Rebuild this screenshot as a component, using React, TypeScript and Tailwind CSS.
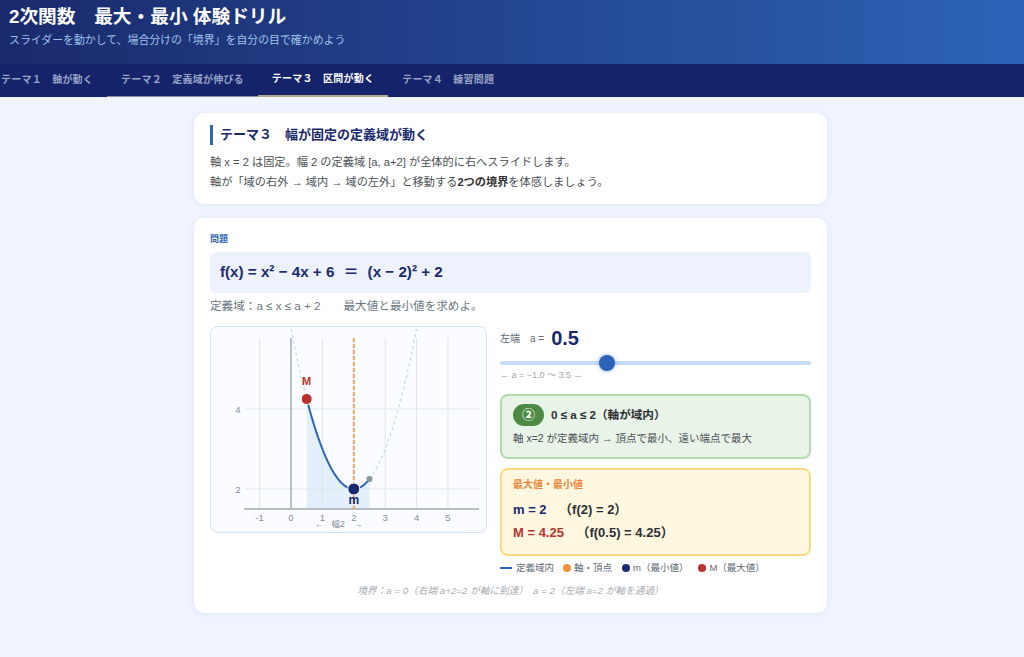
const TABS = ["テーマ１　軸が動く", "テーマ２　定義域が伸びる", "テーマ３　区間が動く", "テーマ４　練習問題"];

// chart scale, px inside the 277x207 panel
const px = (x: number) => 81 + 31.4 * x;
const py = (y: number) => 163 - 40 * (y - 2);
const f = (x: number) => (x - 2) * (x - 2) + 2;

function curve(from: number, to: number) {
  const pts: string[] = [];
  for (let i = 0; i <= 60; i++) {
    const x = from + ((to - from) * i) / 60;
    pts.push(`${px(x).toFixed(1)},${py(f(x)).toFixed(1)}`);
  }
  return pts.join(" ");
}

function Chart() {
  const area = `${px(0.5)},183 ${curve(0.5, 2.5)} ${px(2.5)},183`;
  return (
    <div className="h-[207px] overflow-hidden rounded-lg border border-[#cfe3f3] bg-[#fafcff]">
      <svg width="275" height="205" viewBox="1 1 275 205" className="block" fontFamily="'Liberation Sans', 'Noto Sans CJK JP', sans-serif">
        <polygon points={area} fill="#e3effa" />
        {[-1, 1, 2, 3, 4, 5].map((x) => (
          <line key={x} x1={px(x)} x2={px(x)} y1="12" y2="183" stroke="#dfe4ea" strokeWidth="1" />
        ))}
        {[2, 4].map((y) => (
          <line key={y} x1="35" x2="269" y1={py(y)} y2={py(y)} stroke="#e1e7ee" strokeWidth="1" />
        ))}
        <line x1={px(0)} x2={px(0)} y1="12" y2="183" stroke="#a3abb3" strokeWidth="1.5" />
        <line x1="34" x2="269" y1="183" y2="183" stroke="#a3abb3" strokeWidth="1.5" />
        <polyline points={curve(0, 0.5)} fill="none" stroke="#bcd8ee" strokeWidth="1.2" strokeDasharray="3 3" />
        <polyline points={curve(2.5, 4)} fill="none" stroke="#bcd8ee" strokeWidth="1.2" strokeDasharray="3 3" />
        <line x1={px(2)} x2={px(2)} y1="12" y2="183" stroke="#e8a560" strokeWidth="2" strokeDasharray="4 2" />
        <polyline points={curve(0.5, 2.5)} fill="none" stroke="#2f66b5" strokeWidth="2" />
        <circle cx={px(0.5)} cy={py(4.25)} r="5.5" fill="#b8322e" stroke="#fff" strokeWidth="1" />
        <circle cx={px(2)} cy={py(2)} r="6" fill="#1a2a72" stroke="#fff" strokeWidth="1" />
        <circle cx={px(2.5)} cy={py(2.25)} r="3" fill="#87959f" />
        <text x={px(0.5)} y="59" textAnchor="middle" fontSize="11" fontWeight="700" fill="#b8322e">M</text>
        <text x={px(2)} y="178" textAnchor="middle" fontSize="12" fontWeight="700" fill="#1a2a72">m</text>
        {[-1, 0, 1, 2, 3, 4, 5].map((x) => (
          <text key={x} x={px(x)} y="194.5" textAnchor="middle" fontSize="9.5" fill="#868e96">{x}</text>
        ))}
        <text x="28" y={py(4) + 3.5} textAnchor="middle" fontSize="9.5" fill="#868e96">4</text>
        <text x="28" y={py(2) + 3.5} textAnchor="middle" fontSize="9.5" fill="#868e96">2</text>
        <text x="109" y="201" textAnchor="middle" fontSize="8.5" fill="#868e96">←</text>
        <text x="128" y="201" textAnchor="middle" fontSize="8.5" fill="#868e96">幅2</text>
        <text x="148" y="201" textAnchor="middle" fontSize="8.5" fill="#868e96">→</text>
      </svg>
    </div>
  );
}

function Legend() {
  return (
    <div className="mt-[5px] flex items-center text-[9.5px] leading-[14px] text-[#5f6b75]">
      <span className="mr-[4px] h-[2px] w-3 bg-[#2f66b5]" />
      <span>定義域内</span>
      <span className="ml-[9px] mr-[3px] h-2 w-2 rounded-full bg-[#f0923a]" />
      <span>軸・頂点</span>
      <span className="ml-[10px] mr-[3px] h-2 w-2 rounded-full bg-[#1a2a72]" />
      <span>m（最小値）</span>
      <span className="ml-[10px] mr-[3px] h-2 w-2 rounded-full bg-[#b8322e]" />
      <span>M（最大値）</span>
    </div>
  );
}

export default function App() {
  const a = 0.5;
  const pct = (a + 1) / 4.5;

  return (
    <div className="h-[657px] overflow-hidden bg-[#f0f4ff] font-['Liberation_Sans','Noto_Sans_CJK_JP',sans-serif]">
      <header className="h-[64px] bg-gradient-to-r from-[#1a2a6c] to-[#2c63b6] px-[9px] pt-[4px]">
        <h1 className="text-[18.7px] font-bold leading-[25px] text-white">2次関数　最大・最小 体験ドリル</h1>
        <p className="mt-[3px] text-[10.9px] leading-[16px] text-[#a0c1ec]">スライダーを動かして、場合分けの「境界」を自分の目で確かめよう</p>
      </header>

      <nav className="-ml-[13px] flex h-[33px] bg-[#14236a]">
        {TABS.map((t, i) => (
          <div
            key={t}
            className={`flex h-full items-center px-[14px] pb-[2px] text-[10px] font-bold tracking-[0.23px] ${
              i === 2
                ? "border-b-2 border-[#b5a98c] text-white"
                : i === 1
                  ? "border-b border-[#8a90a8] text-[#98a4c6]"
                  : "text-[#98a4c6]"
            }`}
          >
            {t}
          </div>
        ))}
      </nav>

      <main className="ml-[194px] mt-[16px] w-[633px]">
        <section className="h-[91px] rounded-[10px] bg-white px-[16px] pt-[12px] shadow-[0_1px_6px_rgba(40,70,140,0.08)]">
          <h2 className="border-l-[3px] border-[#2f66b5] pl-[7px] text-[13px] font-bold leading-[20px] text-[#1a2a6c]">テーマ３　幅が固定の定義域が動く</h2>
          <p className="mt-[7px] text-[11.2px] leading-[20px] text-[#4a4f55]">
            軸 x = 2 は固定。幅 2 の定義域 [a, a+2] が全体的に右へスライドします。
            <br />
            軸が「域の右外 → 域内 → 域の左外」と移動する<b className="text-[#333]">2つの境界</b>を体感しましょう。
          </p>
        </section>

        <section className="mt-[14px] h-[395px] rounded-[10px] bg-white px-[16px] pt-[15px] shadow-[0_1px_6px_rgba(40,70,140,0.08)]">
          <div className="text-[9px] font-bold leading-[12px] text-[#2f66b5]">問題</div>
          <div className="mt-[7px] flex h-[41px] items-center rounded-md bg-[#eef2fc] px-[10px] text-[15.2px] font-bold text-[#1a2a6c]">
            <span>f(x) = x² − 4x + 6</span>
            <span className="ml-[9px]">＝</span>
            <span className="ml-[9px]">(x − 2)² + 2</span>
          </div>
          <p className="mt-[5px] text-[11.6px] leading-[16px] text-[#6b7680]">定義域：a ≤ x ≤ a + 2　　最大値と最小値を求めよ。</p>

          <div className="mt-[12px] grid grid-cols-[277px_311px] gap-[13px]">
            <Chart />
            <div>
              <div className="flex h-[24px] items-center text-[10px] text-[#5f6b75]">
                <span>左端　a = </span>
                <span className="ml-[7px] text-[20px] font-bold text-[#1a2a6c]">{a}</span>
              </div>
              <div className="relative mt-[11px] h-1 rounded-full bg-[#c5def5]">
                <div
                  className="absolute -top-[6px] h-4 w-4 -translate-x-1/2 rounded-full bg-[#2c63b6] shadow-[0_0_4px_rgba(44,99,182,0.5)]"
                  style={{ left: 9 + pct * 295 }}
                />
              </div>
              <div className="mt-[4px] text-[9px] leading-[12px] text-[#a1a8ae]">← a = −1.0 〜 3.5 →</div>

              <div className="mt-[13px] h-[65px] rounded-lg border-2 border-[#b5dab0] bg-[#e9f4e8] px-[11px] pt-[8px]">
                <div className="flex items-center">
                  <span className="flex h-[22px] w-[31px] items-center justify-center rounded-full bg-[#4d8b45] text-[13px] font-bold text-white">②</span>
                  <span className="ml-[7px] text-[11.6px] font-bold text-[#2b2f33]">0 ≤ a ≤ 2（軸が域内）</span>
                </div>
                <p className="mt-[5px] text-[10.5px] leading-[14px] text-[#4a4f55]">軸 x=2 が定義域内 → 頂点で最小、遠い端点で最大</p>
              </div>

              <div className="mt-[9px] h-[88px] rounded-lg border-2 border-[#f8dc84] bg-[#fff7e0] px-[11px] pt-[8px]">
                <div className="text-[10px] font-bold leading-[14px] text-[#e8883a]">最大値・最小値</div>
                <div className="mt-[9px] text-[13px] font-bold leading-[17px] text-[#2b2f33]">
                  <span className="mr-[6px] text-[#1a2a6c]">m = 2</span>　（f(2) = 2）
                </div>
                <div className="mt-[6px] text-[13px] font-bold leading-[17px] text-[#2b2f33]">
                  <span className="mr-[6px] text-[#b8322e]">M = 4.25</span>　（f(0.5) = 4.25）
                </div>
              </div>
              <Legend />
            </div>
          </div>

          <p className="mt-[9px] text-center text-[9.7px] italic leading-[14px] text-[#a8adb2]">境界：a = 0（右端 a+2=2 が軸に到達）　a = 2（左端 a=2 が軸を通過）</p>
        </section>
      </main>
    </div>
  );
}
